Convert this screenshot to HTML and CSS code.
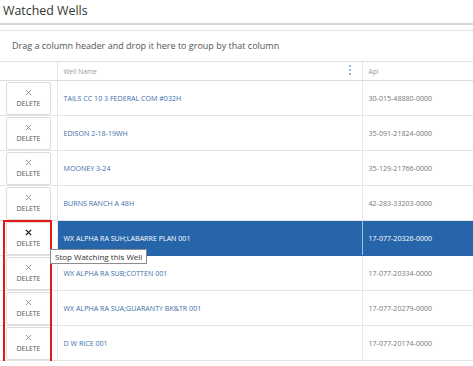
FILE: index.html
```html
<!DOCTYPE html>
<html lang="en">
<head>
    <meta charset="UTF-8">
    <title>Watched Wells</title>
    <link rel="stylesheet" href="styles.css">
</head>
<body>
    <h1 class="page-title">Watched Wells</h1>

    <div class="grid">
        <div class="group-panel">Drag a column header and drop it here to group by that column</div>
        <table class="grid-table">
            <colgroup>
                <col class="col-action">
                <col class="col-name">
                <col class="col-api">
            </colgroup>
            <thead>
                <tr>
                    <th></th>
                    <th class="th-name">Well Name<span class="col-menu"><i></i><i></i><i></i></span></th>
                    <th>Api</th>
                </tr>
            </thead>
            <tbody id="wellRows"></tbody>
        </table>

        <div class="highlight-box"></div>
        <div class="tooltip">Stop Watching this Well</div>
    </div>

    <script>
        const wells = [
            ["TAILS CC 10 3 FEDERAL COM #032H", "30-015-48880-0000"],
            ["EDISON 2-18-19WH", "35-091-21824-0000"],
            ["MOONEY 3-24", "35-129-21766-0000"],
            ["BURNS RANCH A 48H", "42-283-33203-0000"],
            ["WX ALPHA RA SUH;LABARRE PLAN 001", "17-077-20326-0000"],
            ["WX ALPHA RA SUB;COTTEN 001", "17-077-20334-0000"],
            ["WX ALPHA RA SUA;GUARANTY BK&TR 001", "17-077-20279-0000"],
            ["D W RICE 001", "17-077-20174-0000"]
        ];
        const selected = 4;

        const body = document.getElementById("wellRows");
        wells.forEach((well, i) => {
            let tr = document.createElement("tr");
            if (i === selected) tr.classList.add("selected");
            tr.innerHTML =
                '<td class="td-action"><button class="delete-btn">' +
                '<svg viewBox="0 0 8 8" width="7" height="7"><path d="M1 1L7 7M7 1L1 7"/></svg>' +
                '<span>DELETE</span></button></td>' +
                '<td class="td-name"></td><td class="td-api"></td>';
            tr.querySelector(".td-name").textContent = well[0];
            tr.querySelector(".td-api").textContent = well[1];
            body.appendChild(tr);
        });
    </script>
</body>
</html>
```

FILE: styles.css
```css
body {
    margin: 0;
    font-family: "Open Sans", "Noto Sans", sans-serif;
    background: #fff;
    color: #333;
}

.page-title {
    margin: 0;
    height: 22px;
    padding: 1px 0 0 3px;
    font-size: 12.4px;
    font-weight: normal;
    line-height: 20px;
    color: #333;
    border-bottom: 2px solid #d6d6d6;
}

.grid {
    position: relative;
    margin-top: 5px;
    border-top: 1px solid #e2e2e2;
}

.group-panel {
    height: 30px;
    line-height: 30px;
    padding-left: 12px;
    font-size: 9px;
    color: #555;
    border-bottom: 1px solid #e2e2e2;
}

.grid-table {
    width: 100%;
    border-collapse: collapse;
    table-layout: fixed;
}

.col-action { width: 57px; }
.col-name { width: 305px; }

.grid-table th {
    height: 18px;
    padding: 0 0 0 6px;
    text-align: left;
    font-size: 6.6px;
    font-weight: normal;
    color: #999;
    border-bottom: 1px solid #dcdcdc;
    border-left: 1px solid #e6e6e6;
}

.grid-table th:first-child {
    border-left: none;
}

.th-name {
    position: relative;
}

.col-menu {
    position: absolute;
    right: 11px;
    top: 3px;
    display: flex;
    flex-direction: column;
    gap: 2px;
}

.col-menu i {
    width: 2px;
    height: 2px;
    background: #6d9ed6;
    border-radius: 50%;
}

.grid-table td {
    height: 34px;
    padding: 0 0 0 6px;
    font-size: 7.1px;
    border-bottom: 1px solid #e4e4e4;
    border-left: 1px solid #e8e8e8;
    white-space: nowrap;
    overflow: hidden;
}

.grid-table td.td-action {
    border-left: none;
    padding: 0 0 0 6px;
}

.td-name {
    color: #3d70a8;
}

.td-api {
    color: #777;
}

.delete-btn {
    width: 45px;
    height: 33px;
    padding: 0;
    display: flex;
    flex-direction: column;
    align-items: center;
    justify-content: center;
    gap: 3px;
    background: #fff;
    border: 1px solid #dcdcdc;
    border-radius: 2px;
    font-family: inherit;
    font-size: 6.9px;
    color: #555;
    cursor: pointer;
}

.delete-btn svg {
    stroke: #8a8a8a;
    stroke-width: 1;
    fill: none;
}

.selected td.td-name,
.selected td.td-api {
    background: #2765ab;
    color: #fff;
    border-bottom-color: #2765ab;
}

.selected td.td-api {
    border-left: 1px solid #a3bfe0;
}

.selected .delete-btn svg {
    stroke: #222;
    stroke-width: 1.6;
}

.highlight-box {
    position: absolute;
    left: 3px;
    top: 189px;
    width: 45px;
    height: 140px;
    border: 2px solid #e0191b;
}

.tooltip {
    position: absolute;
    left: 50px;
    top: 218px;
    padding: 1px 4px;
    font-size: 8px;
    line-height: 11px;
    color: #333;
    background: #fff;
    border: 1px solid #8c8c8c;
}
```
